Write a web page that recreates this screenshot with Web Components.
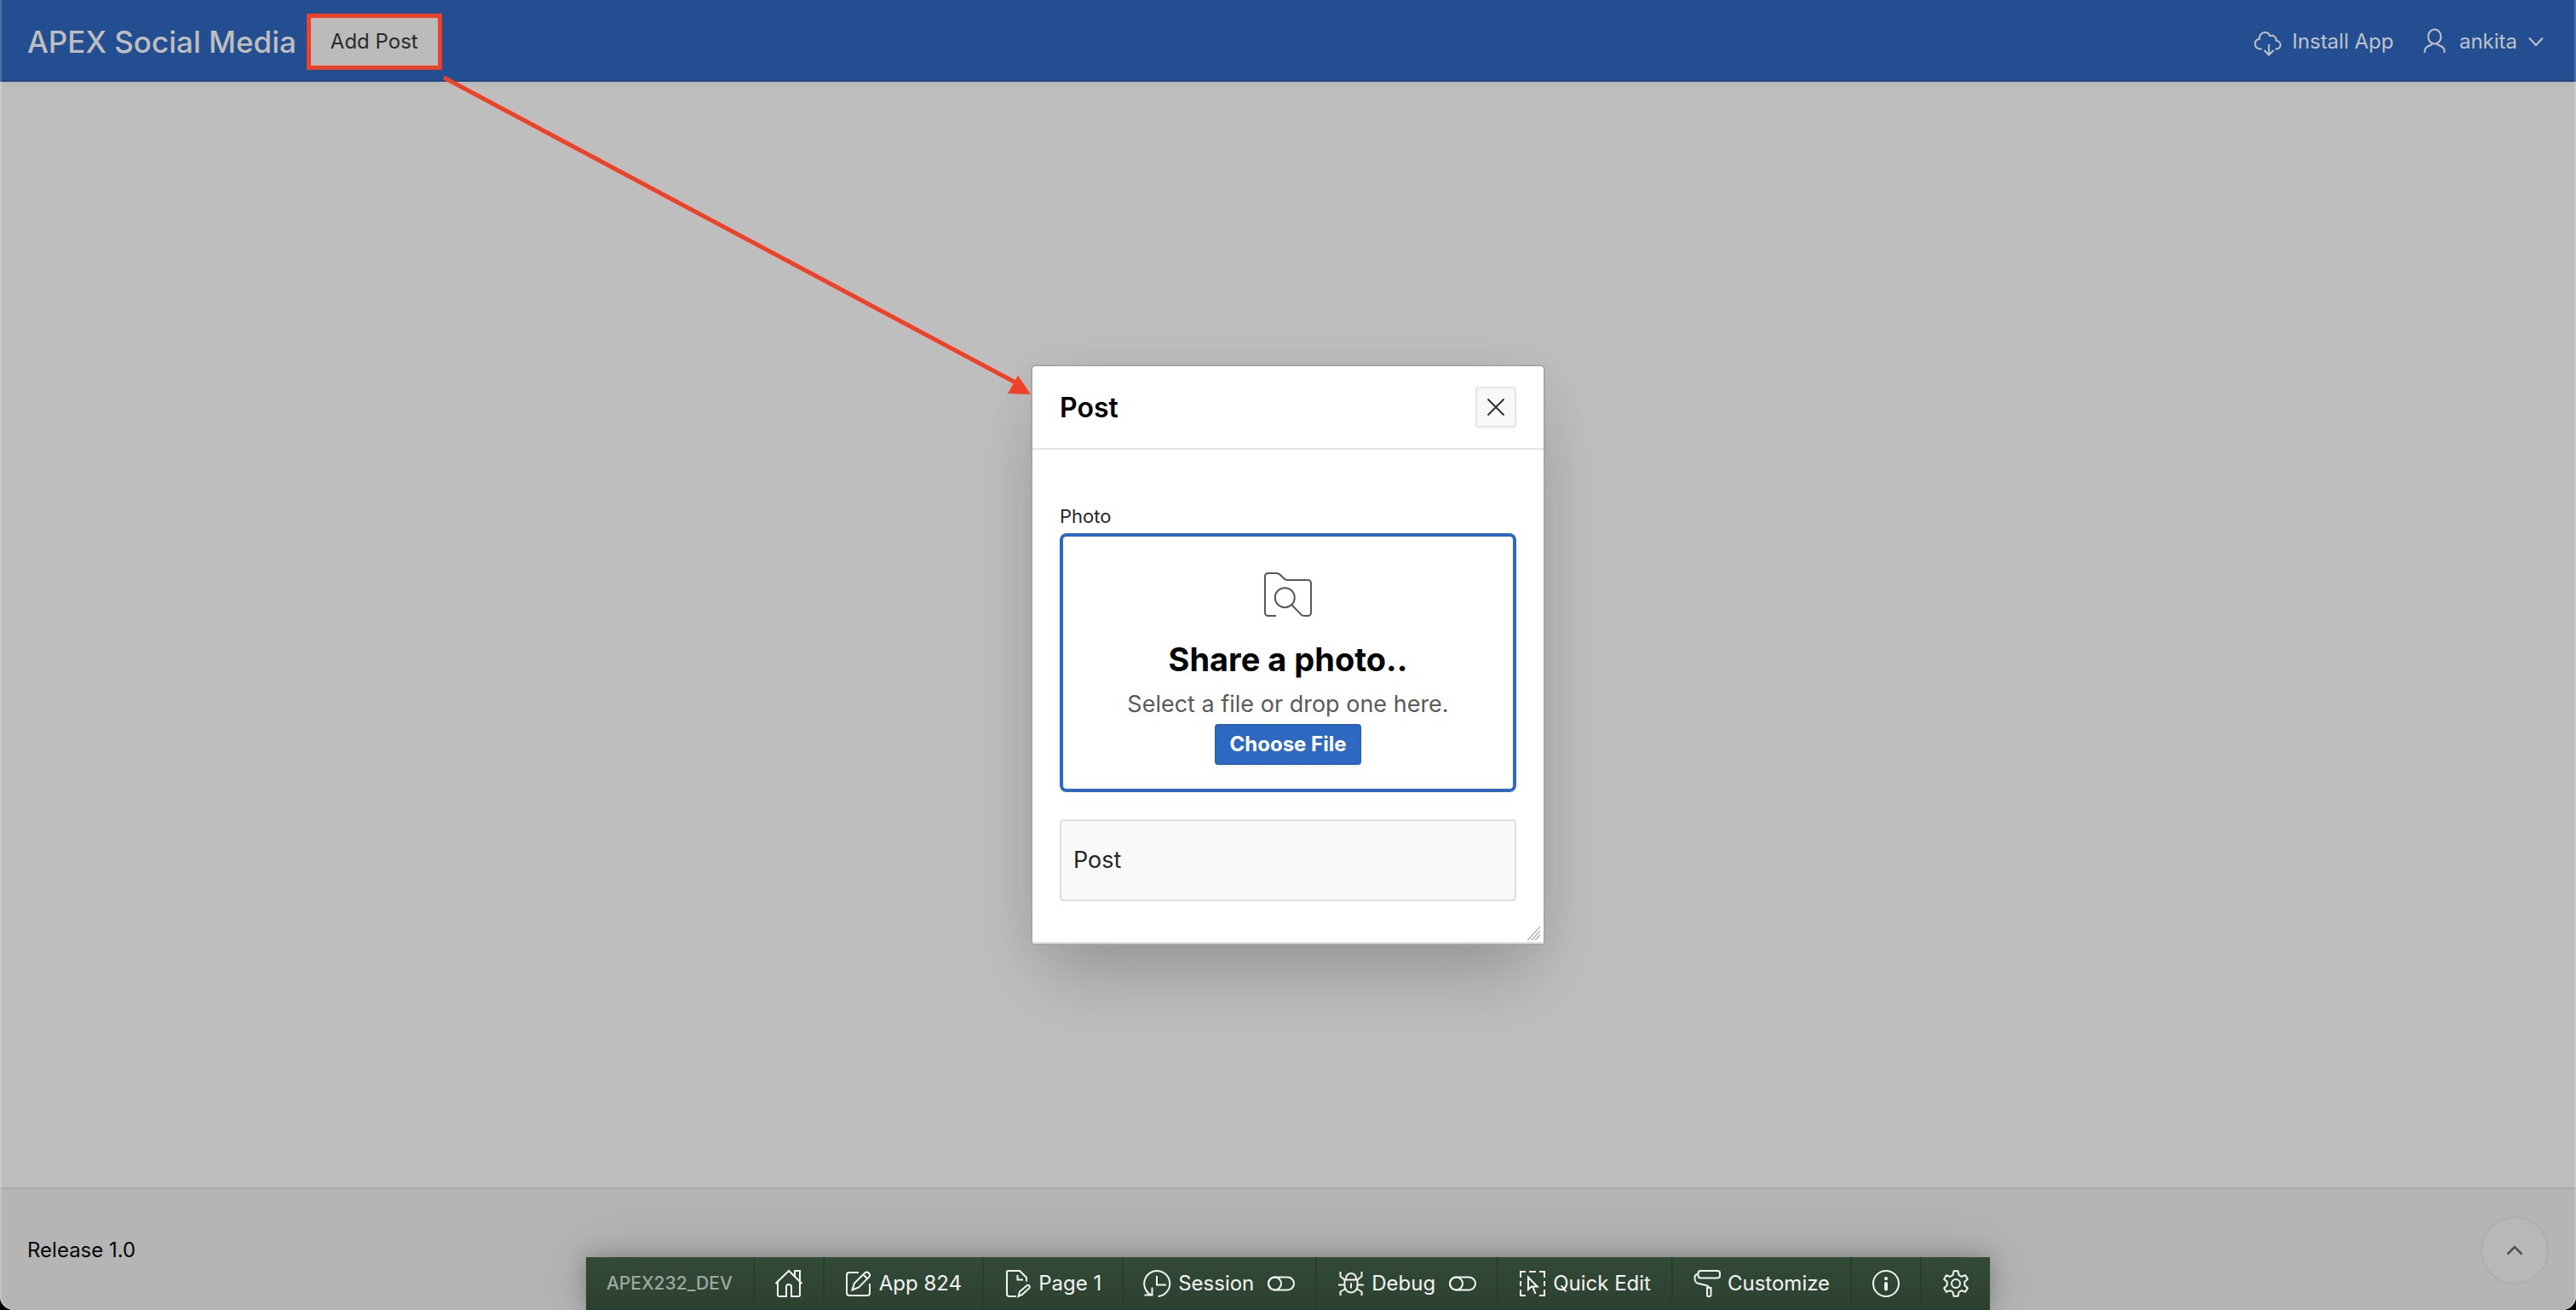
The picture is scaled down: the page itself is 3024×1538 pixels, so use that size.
<!DOCTYPE html>
<html lang="en">
<head>
<meta charset="utf-8">
<title>APEX Social Media</title>
<style>
html, body { margin: 0; height: 100%; }
body { font-family: Inter, "Liberation Sans", sans-serif; background: #000; }
</style>
</head>
<body>
<social-app></social-app>
<script>
const ICONS = {
  cloud: ['0 0 32 32', '<path d="M9 24.500H7.500A6 6 0 0 1 1.200 19c-.2-3.400 2-5.800 5.200-6.300C6 8.800 8.800 5 12.800 5c2.700 0 5 1.700 5.900 4.100 4.300-1.400 7.900 1.700 7.600 5.700 3 .4 4.900 2.600 4.700 5.200-.2 2.400-2 4.300-4.500 4.500H25M17.500 19v12M12 26l5.500 5.500L23 26"/>'],
  user: ['0 0 32 32', '<ellipse cx="16" cy="10" rx="7.500" ry="8.500"/><path d="M4.500 29v-2c0-3.500 2-5 5-6.200 2-.8 4-1.400 4.300-3M27.500 29v-2c0-3.500-2-5-5-6.200-2-.8-4-1.400-4.300-3"/>'],
  down: ['0 0 18 12', '<path d="M1 1.500l8 8.500 8-8.500"/>'],
  up: ['0 0 20 12', '<path d="M1.500 10.500L10 2l8.500 8.500" stroke-width="2.500"/>'],
  close: ['0 0 22 22', '<path d="M1.500 1.500l19 19M20.500 1.500l-19 19"/>'],
  folder: ['0 0 56 52', '<path d="M14 51H4.500A3.500 3.500 0 0 1 1 47.500v-43A3.500 3.500 0 0 1 4.500 1h10c2 0 3.200.7 4.500 2l4 4c1.300 1.300 2.300 2 4.500 2h24A3.500 3.500 0 0 1 55 12.500v35a3.500 3.500 0 0 1-3.500 3.500H47c-1.600 0-2.800-.6-4-1.800L32.300 38"/><circle cx="24.300" cy="29.700" r="11.500"/>'],
  home: ['0 0 32 32', '<path d="M.5 16L16 1l15.500 15M3 14v15.500A1.500 1.500 0 0 0 4.500 31H13V20a3 3 0 0 1 6 0v11h8.500a1.500 1.500 0 0 0 1.500-1.500V14M23 7.500V1h6v12.500"/>'],
  edit: ['-1 -1 32 32', '<path d="M15 2H4a3 3 0 0 0-3 3v21a3 3 0 0 0 3 3h21a3 3 0 0 0 3-3V15M7.500 22.500l2.500-8L22.500 2.300a2.800 2.800 0 0 1 4 0l.8.8a2.800 2.800 0 0 1 0 4L15 19.500zM20.500 4.500L25 9"/>'],
  page: ['-2 0 32 32', '<path d="M12 31H4a3 3 0 0 1-3-3V2.500A1.500 1.500 0 0 1 2.500 1h13.500l8 8v4.500M13.500 6v5.500h6.500M14.500 31l1.500-5.500 8.200-7a2 2 0 0 1 3 2.900L19 28.800z"/>'],
  session: ['0 0 32 32', '<path d="M16.500 31A15 15 0 1 0 2.500 24c1.300 2.600 3.500 4.500 6.500 5.300M9.500 20.500v9H.5M15 7v10.500h11"/>'],
  bug: ['-1 -1 32 32', '<path d="M9 10.500V9a6 6 0 0 1 12 0v1.500M7.500 10.500h15V18a7.500 7.500 0 0 1-15 0zM15 14.500v6M2.500 1v5.500L7.500 10.500M27.500 1v5.500L22.500 10.500M0 16.500h7.500M22.500 16.500H30M2.500 29v-4.500L8.500 21M27.500 29v-4.500L21.500 21"/>'],
  toggle: ['0 0 32 20', '<rect x="1" y="2.500" width="30" height="15" rx="7.500"/><circle cx="8.500" cy="10" r="7.500"/>'],
  quick: ['-1 -1 32 32', '<path d="M1 8V1h6M11 1h8M23 1h6v7M1 12v6M29 12v6M1 22v7h6M29 22v7h-6M10 7.500v14.500l3.700-3.400h7zM15.500 19l3 8"/>'],
  roller: ['0 0 32 32', '<rect x="5.500" y="1" width="25.500" height="8.500" rx="3"/><path d="M5.500 5C2.500 5 1.500 6.500 1.500 9c0 5 1.500 6 4 6.700l9 2.300c3 .7 4 1.500 4 3.500M16 21h4.500v8a2.250 2.250 0 0 1-4.500 0z"/>'],
  info: ['0 0 32 32', '<circle cx="16" cy="16" r="15"/><path d="M16 16v6.500" stroke-width="4" stroke-linecap="round"/><circle cx="16" cy="10" r="1" stroke-width="2.200"/>'],
  gear: ['0 0 32 32', '<circle cx="16" cy="16" r="5"/><path d="M13.500 1.200h5l1 4.800 3.200 1.800 4.500-1.500 2.600 4.400L26.300 14v4l3.500 3.300-2.600 4.400-4.500-1.500-3.200 1.800-1 4.800h-5l-1-4.800-3.200-1.800-4.500 1.500-2.600-4.400L5.700 18v-4l-3.500-3.300 2.600-4.400 4.500 1.500L12.500 6z" stroke-linejoin="round"/>'],
  grip: ['0 0 16 16', '<path d="M1 16L16 0M5.500 16L16 5M10 16l6-6.500" stroke-width="1.500"/>']
};

function define(name, html, setup) {
  const t = document.createElement('template');
  t.innerHTML = html;
  customElements.define(name, class extends HTMLElement {
    constructor() {
      super();
      this.attachShadow({ mode: 'open' }).append(t.content.cloneNode(true));
    }
    connectedCallback() { if (setup) setup(this, this.shadowRoot); }
  });
}

define('app-icon', `
<style>:host{display:block;flex:none} svg{display:block;width:100%;height:100%;overflow:visible}</style>
<svg fill="none" stroke="currentColor" stroke-width="2" aria-hidden="true"></svg>`, (el, root) => {
  const [box, body] = ICONS[el.getAttribute('name')];
  const svg = root.querySelector('svg');
  svg.setAttribute('viewBox', box);
  svg.innerHTML = body;
  const [, , w, h] = box.split(' ');
  el.style.width = w + 'px';
  el.style.height = h + 'px';
});

define('app-header', `
<style>
:host{display:block}
header{display:flex;align-items:center;box-sizing:border-box;height:96px;padding:4px 38px 0 32px;background:#234e91;border-bottom:2px solid #214682;color:#bfc3c9;box-shadow:0 2px 6px rgba(0,0,0,.06)}
h1{margin:0;font-size:35px;line-height:48px;font-weight:500;color:#bebebe}
.add{margin-left:12px;box-sizing:border-box;height:66px;padding:0 23px;border:5px solid #ee4128;background:#bbb;color:#2a2a2a;font:400 24px/32px Inter,sans-serif}
nav{margin-left:auto;display:flex;align-items:center;gap:32px}
nav button{display:flex;align-items:center;gap:13px;border:0;padding:0;background:none;color:inherit;font:400 24px/32px Inter,sans-serif}
</style>
<header><h1>APEX Social Media</h1><button class="add">Add Post</button>
<nav><button><app-icon name="cloud"></app-icon>Install App</button>
<button><app-icon name="user"></app-icon>ankita<app-icon name="down"></app-icon></button></nav></header>`);

define('app-footer', `
<style>
:host{display:block}
footer{display:flex;align-items:center;justify-content:space-between;box-sizing:border-box;height:144px;padding:2px 32px 0;border-top:2px solid #acacac;background:#b5b5b5;color:#060606;font-size:24px;line-height:32px}
button{display:flex;align-items:center;justify-content:center;width:80px;height:80px;padding:0;border:2px solid #aeaeae;border-radius:50%;background:#b8b8b8;color:#505050}
</style>
<footer><span>Release 1.0</span><button aria-label="Go to top"><app-icon name="up"></app-icon></button></footer>`);

define('drop-zone', `
<style>
:host{display:block}
label{display:block;font-size:22px;line-height:28px;color:#262626;margin-bottom:6px}
.zone{display:flex;flex-direction:column;align-items:center;box-sizing:border-box;height:304px;padding-top:42px;border:4px solid #2e69c1;border-radius:8px;color:#585858}
h2{margin:22px 0 0;font-size:38px;line-height:56px;font-weight:700;color:#000}
p{margin:5px 0 0;font-size:27px;line-height:40px;color:#5a5a5a}
button{margin-top:3px;height:48px;padding:0 16px;border:2px solid #2a61b3;border-radius:4px;background:#2e69c1;color:#fff;font:700 24px/32px Inter,sans-serif;box-shadow:0 2px 4px rgba(0,0,0,.06)}
</style>
<label for="file">Photo</label>
<div class="zone"><app-icon name="folder"></app-icon><h2>Share a photo..</h2><p>Select a file or drop one here.</p>
<button>Choose File</button><input id="file" type="file" hidden></div>`, (el, root) => {
  root.querySelector('button').onclick = () => root.querySelector('input').click();
});

define('post-dialog', `
<style>
:host{display:block;box-sizing:border-box;width:604px;border:2px solid #a6a6a6;border-radius:6px;background:#fff;position:relative;pointer-events:auto;box-shadow:0 48px 80px -16px rgba(0,0,0,.2),0 0 60px rgba(0,0,0,.05)}
header{display:flex;align-items:center;justify-content:space-between;height:96px;padding:0 32px;border-bottom:2px solid #e4e4e4}
h2{margin:0;padding-top:2px;font-size:32px;line-height:40px;font-weight:600;color:#000}
header button{display:flex;align-items:center;justify-content:center;width:48px;height:48px;padding:0;border:2px solid #e4e4e4;border-radius:4px;background:#f8f8f8;color:#333;box-shadow:0 2px 4px rgba(0,0,0,.04)}
.body{display:flex;flex-direction:column;padding:64px 32px 48px;border-bottom:2px solid #dedede}
textarea{display:block;box-sizing:border-box;width:100%;height:96px;margin-top:32px;padding:28px 14px;border:2px solid #dedede;border-radius:4px;background:#f9f9f9;color:#262626;font:400 27px/36px Inter,sans-serif;resize:none;overflow:hidden}
textarea::placeholder{color:#262626;opacity:1}
.grip{position:absolute;right:4px;bottom:4px;color:#b4b4b4}
</style>
<header><h2>Post</h2><button aria-label="Close"><app-icon name="close"></app-icon></button></header>
<div class="body"><drop-zone></drop-zone>
<textarea aria-label="Post" placeholder="Post"></textarea></div>
<app-icon class="grip" name="grip"></app-icon>`);

define('tool-item', `
<style>
:host{display:flex;border-left:2px solid #293c2d}
:host([first]){border-left:0}
button{display:flex;align-items:center;gap:8px;border:0;padding:0 24px;background:none;color:#f3f5f3;font:400 24px/32px Inter,sans-serif}
:host([first]) button{font-size:21px;font-weight:500;color:#9ea9a0}
</style>
<button><slot></slot></button>`);

define('dev-toolbar', `
<style>
:host{display:flex;height:62px;pointer-events:auto;background:linear-gradient(#334a38,#2c4030);box-shadow:0 0 24px rgba(0,0,0,.25),0 0 80px rgba(0,0,0,.15)}
.sw{margin-left:8px}
</style>
<tool-item first>APEX232_DEV</tool-item>
<tool-item><app-icon name="home"></app-icon></tool-item>
<tool-item><app-icon name="edit"></app-icon>App 824</tool-item>
<tool-item><app-icon name="page"></app-icon>Page 1</tool-item>
<tool-item><app-icon name="session"></app-icon>Session<app-icon class="sw" name="toggle"></app-icon></tool-item>
<tool-item><app-icon name="bug"></app-icon>Debug<app-icon class="sw" name="toggle"></app-icon></tool-item>
<tool-item><app-icon name="quick"></app-icon>Quick Edit</tool-item>
<tool-item><app-icon name="roller"></app-icon>Customize</tool-item>
<tool-item><app-icon name="info"></app-icon></tool-item>
<tool-item><app-icon name="gear"></app-icon></tool-item>`);

define('callout-arrow', `
<style>:host{display:block;pointer-events:none} svg{display:block;overflow:visible}</style>
<svg width="692" height="374" aria-hidden="true"><path d="M1 1L672 359" stroke="#ee4128" stroke-width="5"/><path d="M690 373l-27-1 12-21z" fill="#ee4128"/></svg>`);

define('social-app', `
<style>
:host{display:flex;flex-direction:column;position:relative;min-height:100vh;box-sizing:border-box;background:#bebebe;border-radius:0 0 16px 16px;overflow:hidden}
main{flex:1}
.layer{position:absolute;inset:0;display:flex;justify-content:center;pointer-events:none}
.mid{align-items:center}
.low{align-items:flex-end}
.arrow{position:absolute;left:520px;top:90px}
.rim{position:absolute;inset:0;border:solid rgba(255,255,255,.2);border-width:0 2px;border-radius:0 0 16px 16px;pointer-events:none}
</style>
<app-header></app-header><main></main><app-footer></app-footer>
<div class="layer mid"><post-dialog></post-dialog></div>
<callout-arrow class="arrow"></callout-arrow>
<div class="layer low"><dev-toolbar></dev-toolbar></div>
<div class="rim"></div>`);
</script>
</body>
</html>
